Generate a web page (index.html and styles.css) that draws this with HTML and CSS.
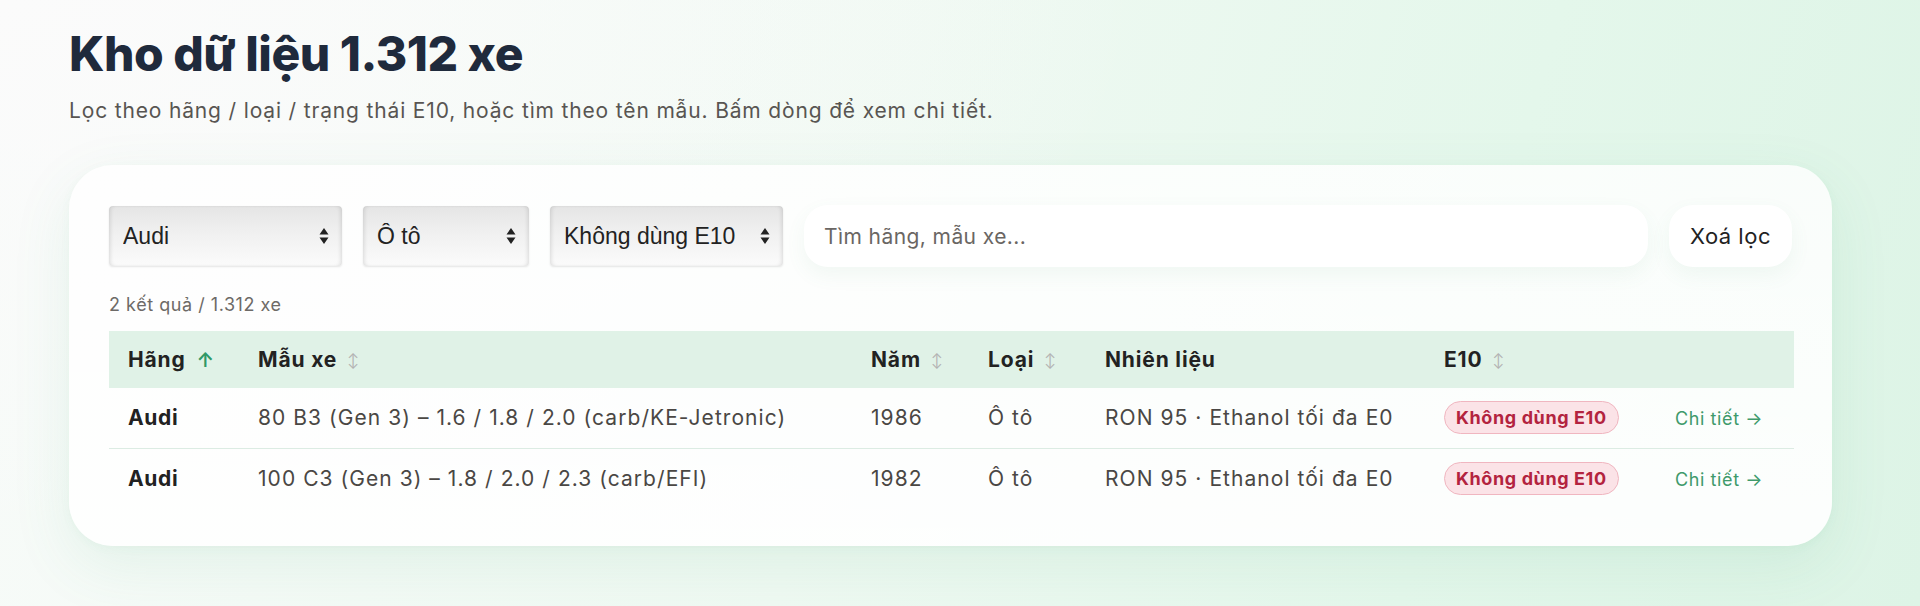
FILE: index.html
```html
<!DOCTYPE html>
<html lang="vi">
<head>
<meta charset="utf-8">
<title>Kho dữ liệu xe</title>
<link rel="stylesheet" href="styles.css">
</head>
<body>
<main class="page">
  <h1 class="title">Kho dữ liệu 1.312 xe</h1>
  <p class="subtitle">Lọc theo hãng / loại / trạng thái E10, hoặc tìm theo tên mẫu. Bấm dòng để xem chi tiết.</p>
  <section class="card">
    <div class="filters">
      <select class="sel sel-brand"><option>Audi</option></select>
      <select class="sel sel-type"><option>Ô tô</option></select>
      <select class="sel sel-e10"><option>Không dùng E10</option></select>
      <input class="search" type="text" placeholder="Tìm hãng, mẫu xe...">
      <button class="clear" type="button">Xoá lọc</button>
    </div>
    <div class="count">2 kết quả / 1.312 xe</div>
    <table class="grid">
      <colgroup>
        <col class="c-brand"><col class="c-model"><col class="c-year"><col class="c-type"><col class="c-fuel"><col class="c-e10"><col class="c-link">
      </colgroup>
      <thead>
        <tr>
          <th>Hãng<span class="sort active">↑</span></th>
          <th>Mẫu xe<span class="sort">↕</span></th>
          <th>Năm<span class="sort">↕</span></th>
          <th>Loại<span class="sort">↕</span></th>
          <th>Nhiên liệu</th>
          <th>E10<span class="sort">↕</span></th>
          <th></th>
        </tr>
      </thead>
      <tbody>
        <tr>
          <td class="brand">Audi</td>
          <td>80 B3 (Gen 3) – 1.6 / 1.8 / 2.0 (carb/KE-Jetronic)</td>
          <td>1986</td>
          <td>Ô tô</td>
          <td>RON 95 · Ethanol tối đa E0</td>
          <td><span class="badge">Không dùng E10</span></td>
          <td><a class="more" href="#">Chi tiết →</a></td>
        </tr>
        <tr>
          <td class="brand">Audi</td>
          <td>100 C3 (Gen 3) – 1.8 / 2.0 / 2.3 (carb/EFI)</td>
          <td>1982</td>
          <td>Ô tô</td>
          <td>RON 95 · Ethanol tối đa E0</td>
          <td><span class="badge">Không dùng E10</span></td>
          <td><a class="more" href="#">Chi tiết →</a></td>
        </tr>
      </tbody>
    </table>
  </section>
</main>
</body>
</html>
```

FILE: styles.css
```css
* { box-sizing: border-box; }

html, body { height: 100%; }

body {
  margin: 0;
  font-family: "Inter", "Noto Sans", sans-serif;
  color: #222;
  background:
    radial-gradient(ellipse 60% 90% at 0% 0%, #fbfbfb 0%, rgba(251,251,251,0) 100%),
    linear-gradient(105deg, #f8fbf9 0%, #eff9f2 45%, #e4f7eb 75%, #ddf4e6 100%);
  overflow: hidden;
}

.page {
  padding: 25px 88px 0 69px;
}

.title {
  margin: 0;
  font-size: 48px;
  line-height: 58px;
  font-weight: 800;
  color: #1f2a3c;
  letter-spacing: -0.5px;
}

.subtitle {
  margin: 14px 0 0;
  font-size: 21px;
  line-height: 28px;
  letter-spacing: 0.04em;
  color: #585552;
}

.card {
  margin-top: 40px;
  padding: 40px 40px 38px;
  border-radius: 44px;
  background: linear-gradient(180deg, rgba(255,255,255,0.82) 0%, rgba(255,255,255,0.92) 100%);
  box-shadow: 0 20px 60px rgba(70, 170, 115, 0.10), 0 2px 10px rgba(70, 170, 115, 0.05);
}

.filters {
  display: flex;
  align-items: center;
  gap: 21px;
  height: 62px;
}

.sel {
  appearance: none;
  -webkit-appearance: none;
  height: 60px;
  border: none;
  border-radius: 4px;
  padding: 0 36px 0 14px;
  font-family: "Liberation Sans", Arial, sans-serif;
  font-size: 23px;
  color: #222;
  background-color: #efefef;
  background-image:
    url("data:image/svg+xml;utf8,<svg xmlns='http://www.w3.org/2000/svg' width='10' height='18' viewBox='0 0 10 18'><path d='M5 1 L9.5 7.5 H0.5 Z M5 17 L9.5 10.5 H0.5 Z' fill='%23222'/></svg>"),
    linear-gradient(180deg, #e5e5e5 0%, #f0f0f0 45%, #fbfbfb 100%);
  background-repeat: no-repeat, no-repeat;
  background-position: right 13px center, 0 0;
  background-size: 10px 18px, 100% 100%;
  box-shadow: inset 3px 0 4px -2px rgba(0,0,0,0.13), inset -3px 0 4px -2px rgba(0,0,0,0.13), 0 1px 2px rgba(0,0,0,0.10);
}

.sel-brand { width: 233px; }
.sel-type { width: 166px; }
.sel-e10 { width: 233px; }

.search {
  flex: 1;
  height: 62px;
  border: none;
  border-radius: 24px;
  padding: 0 20px;
  background: #fff;
  font-family: inherit;
  font-size: 21px;
  letter-spacing: 0.02em;
  color: #222;
  box-shadow: 0 8px 20px rgba(90, 160, 120, 0.07);
  outline: none;
}

.search::placeholder { color: #6a6663; }

.clear {
  width: 123px;
  height: 62px;
  border: none;
  border-radius: 24px;
  background: #fff;
  font-family: inherit;
  font-size: 22px;
  letter-spacing: 0.5px;
  color: #222;
  box-shadow: 0 8px 20px rgba(90, 160, 120, 0.07);
}

.count {
  margin-top: 26px;
  font-size: 18px;
  line-height: 24px;
  letter-spacing: 0.03em;
  color: #6d6a67;
}

.grid {
  margin-top: 14px;
  width: 100%;
  border-collapse: collapse;
  table-layout: fixed;
}

.c-brand { width: 130px; }
.c-model { width: 613px; }
.c-year { width: 117px; }
.c-type { width: 117px; }
.c-fuel { width: 339px; }
.c-e10 { width: 231px; }
.c-link { width: 138px; }

.grid th {
  height: 57px;
  padding: 0 0 0 19px;
  background: #e0f2e7;
  text-align: left;
  font-size: 21px;
  letter-spacing: 0.04em;
  font-weight: 700;
  color: #222;
  white-space: nowrap;
}

.sort {
  display: inline-block;
  margin-left: 10px;
  font-size: 14px;
  font-weight: 400;
  letter-spacing: 0;
  color: #b3b3b3;
  vertical-align: 2px;
}

.sort.active {
  margin-left: 11px;
  font-size: 20px;
  font-weight: 600;
  color: #2f9866;
  vertical-align: 0;
}

.grid td {
  height: 60px;
  padding: 0 0 0 19px;
  font-size: 21px;
  letter-spacing: 0.05em;
  color: #4a4744;
  white-space: nowrap;
}

.grid tbody tr + tr td { border-top: 1px solid #dcece3; }

.grid td.brand {
  font-weight: 700;
  letter-spacing: 0.03em;
  color: #222;
}

.badge {
  display: inline-block;
  padding: 3px 11px;
  border: 1.5px solid #f0b6c0;
  border-radius: 999px;
  background: #fbe3e7;
  color: #b3233f;
  font-size: 18px;
  font-weight: 700;
  letter-spacing: 0.6px;
  line-height: 25px;
}

.more {
  color: #3f9a6b;
  text-decoration: none;
  font-size: 18px;
  letter-spacing: 0.6px;
}
```
